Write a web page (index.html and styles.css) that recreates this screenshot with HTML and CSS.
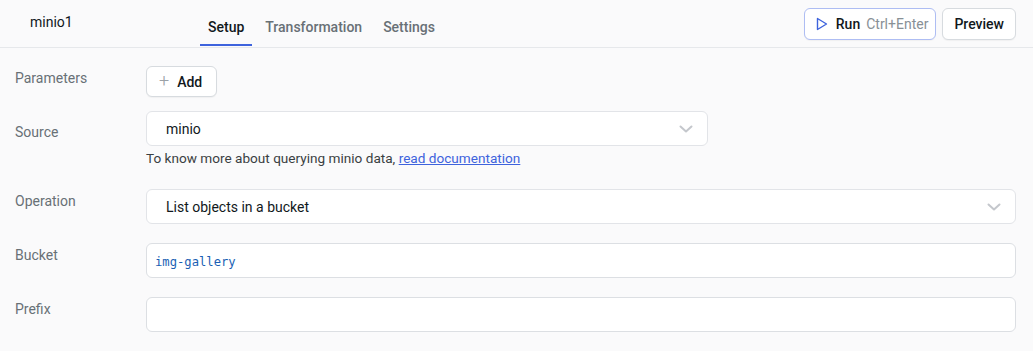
FILE: index.html
```html
<!DOCTYPE html>
<html lang="en">
<head>
    <meta charset="UTF-8">
    <title>minio1</title>
    <link rel="stylesheet" href="styles.css">
</head>
<body>
    <div class="header">
        <div class="query-name">minio1</div>
        <div class="tabs">
            <span class="tab active">Setup</span>
            <span class="tab">Transformation</span>
            <span class="tab">Settings</span>
        </div>
        <div class="actions">
            <button class="btn run-btn">
                <svg width="12" height="14" viewBox="0 0 12 14"><path d="M1.5 1.5 L10.5 7 L1.5 12.5 Z" fill="none" stroke="#3e63dd" stroke-width="1.4" stroke-linejoin="round"/></svg>
                <span class="run-label">Run</span>
                <span class="shortcut">Ctrl+Enter</span>
            </button>
            <button class="btn">Preview</button>
        </div>
    </div>

    <div class="form">
        <div class="row row-params">
            <div class="label">Parameters</div>
            <div class="field">
                <button class="btn add-btn"><span class="plus">+</span> Add</button>
            </div>
        </div>

        <div class="row row-source">
            <div class="label">Source</div>
            <div class="field">
                <div class="select narrow">
                    <span>minio</span>
                    <svg class="chevron" width="14" height="8" viewBox="0 0 14 8"><path d="M1.5 1.5 L7 6.5 L12.5 1.5" fill="none" stroke="#c4c7cc" stroke-width="2" stroke-linecap="round" stroke-linejoin="round"/></svg>
                </div>
                <div class="hint">To know more about querying minio data, <a href="#">read documentation</a></div>
            </div>
        </div>

        <div class="row">
            <div class="label">Operation</div>
            <div class="field">
                <div class="select">
                    <span>List objects in a bucket</span>
                    <svg class="chevron" width="14" height="8" viewBox="0 0 14 8"><path d="M1.5 1.5 L7 6.5 L12.5 1.5" fill="none" stroke="#c4c7cc" stroke-width="2" stroke-linecap="round" stroke-linejoin="round"/></svg>
                </div>
            </div>
        </div>

        <div class="row">
            <div class="label">Bucket</div>
            <div class="field">
                <div class="input code">img-gallery</div>
            </div>
        </div>

        <div class="row">
            <div class="label">Prefix</div>
            <div class="field">
                <div class="input"></div>
            </div>
        </div>
    </div>
</body>
</html>
```

FILE: styles.css
```css
body {
    font-family: Roboto, 'Liberation Sans', sans-serif;
    background: #fafafb;
    color: #11181c;
    margin: 0;
    font-size: 14px;
}

.header {
    display: flex;
    align-items: center;
    height: 47px;
    border-bottom: 1px solid #e6e8eb;
    padding: 0 17px 0 30px;
}

.query-name {
    width: 170px;
    font-size: 14px;
    margin-top: -4px;
}

.tabs {
    display: flex;
    align-self: stretch;
}

.tab {
    display: flex;
    align-items: center;
    padding: 9px 8px 0;
    margin-right: 5px;
    color: #687076;
    font-weight: 500;
    border-bottom: 2px solid transparent;
    margin-bottom: 1px;
}

.tab.active {
    color: #11181c;
    border-bottom-color: #3e63dd;
}

.actions {
    margin-left: auto;
    display: flex;
    gap: 6px;
}

.btn {
    font-family: inherit;
    font-size: 14px;
    font-weight: 500;
    color: #11181c;
    background: #fff;
    border: 1px solid #d7dbdf;
    border-radius: 6px;
    height: 32px;
    padding: 0 11px;
    display: flex;
    align-items: center;
    box-shadow: 0 1px 1px rgba(0, 0, 0, 0.04);
}

.run-btn {
    border-color: #aebdf3;
    padding: 0 7px 0 11px;
}

.run-btn svg {
    margin-right: 8px;
}

.shortcut {
    color: #889096;
    font-weight: 400;
    margin-left: 6px;
}

.form {
    padding: 18px 17px 0 15px;
}

.row {
    display: flex;
    margin-bottom: 19px;
}

.row-params {
    margin-bottom: 14px;
}

.row-source {
    margin-bottom: 23px;
}

.label {
    width: 131px;
    flex-shrink: 0;
    color: #687076;
    padding-top: 4px;
}

.row-source .label {
    padding-top: 13px;
}

.field {
    flex: 1;
}

.add-btn {
    height: 31px;
    padding: 0 14px 0 12px;
}

.plus {
    color: #9ba1a6;
    font-weight: 300;
    font-size: 18px;
    margin-right: 8px;
    margin-top: -2px;
}

.select,
.input {
    background: #fff;
    border: 1px solid #e2e4e8;
    border-radius: 6px;
    height: 35px;
    box-sizing: border-box;
    display: flex;
    align-items: center;
}

.select {
    padding: 0 14px 0 19px;
    justify-content: space-between;
}

.select.narrow {
    width: 562px;
}

.hint {
    margin-top: 4px;
    font-size: 13.6px;
    color: #3a3f42;
}

.hint a {
    color: #3e63dd;
}

.input {
    border-color: #dcdfe3;
    padding: 0 8px;
}

.code {
    font-family: 'DejaVu Sans Mono', monospace;
    font-size: 12.2px;
    color: #1a5fb4;
    padding-top: 2px;
}
```
